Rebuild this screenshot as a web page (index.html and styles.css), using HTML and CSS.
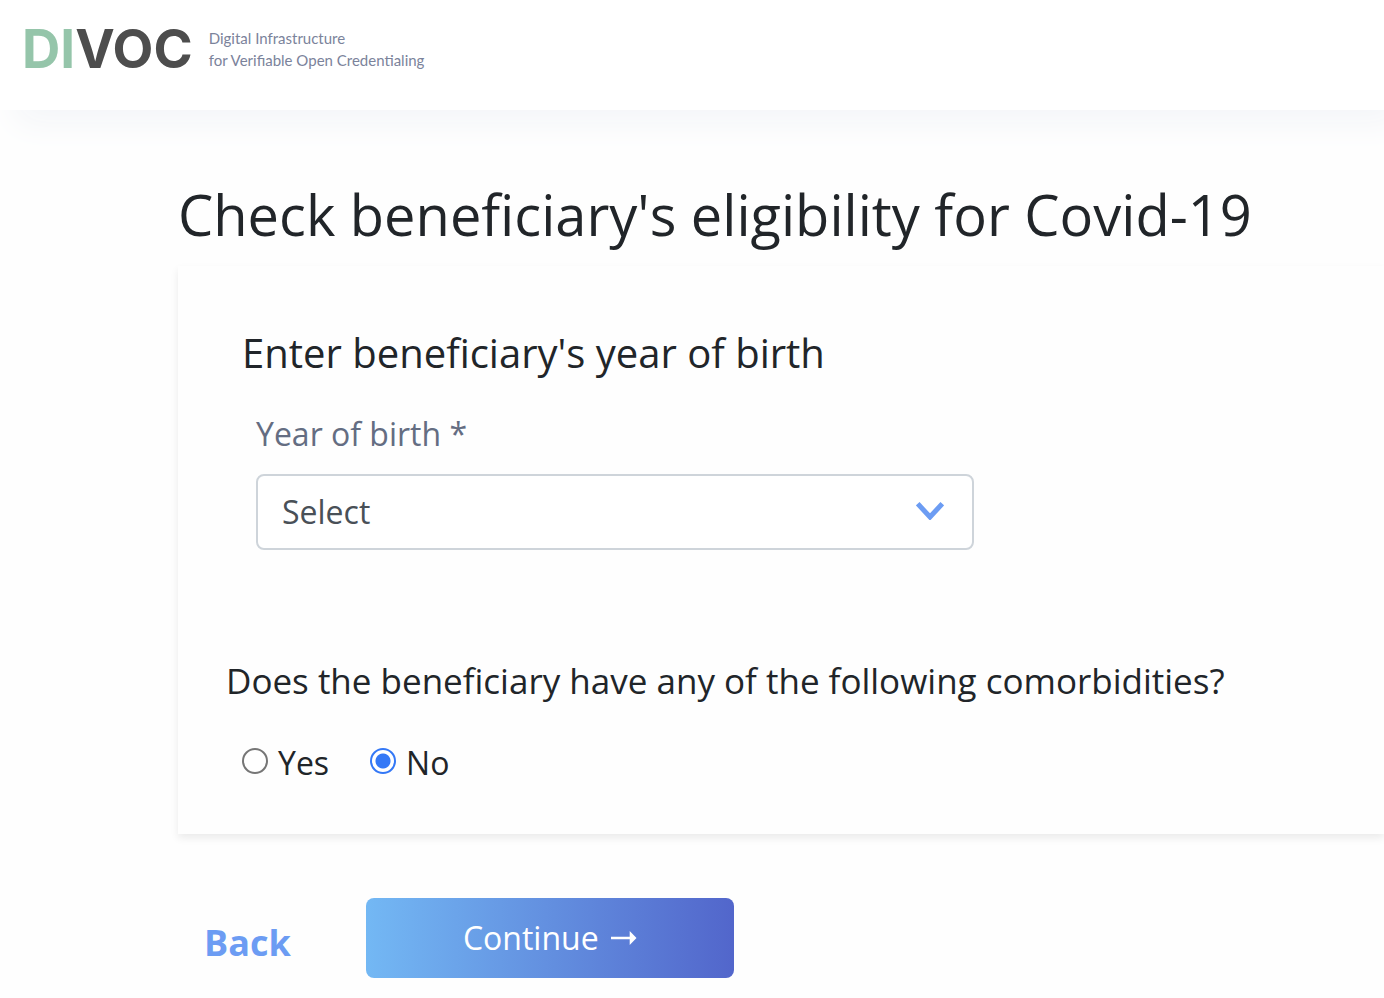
FILE: index.html
```
<!DOCTYPE html>
<html lang="en">
<head>
  <meta charset="utf-8">
  <meta name="viewport" content="width=device-width, initial-scale=1">
  <title>DIVOC - Check eligibility</title>
  <link rel="stylesheet" href="styles.css">
</head>
<body>
  <header class="header">
    <div class="logo"><span class="logo-accent">DI</span>VOC</div>
    <p class="tagline">Digital Infrastructure<br>for Verifiable Open Credentialing</p>
  </header>
  <main class="main">
    <h1 class="title">Check beneficiary's eligibility for Covid-19</h1>
    <form class="form">
      <div class="card">
        <section class="birth">
          <h2 class="subtitle">Enter beneficiary's year of birth</h2>
          <div class="field">
            <label class="label" for="year">Year of birth *</label>
            <div class="select-wrap">
              <select class="select" id="year">
                <option>Select</option>
              </select>
              <svg class="chevron" viewBox="0 0 28 18" aria-hidden="true"><path d="M1.7 1.7 14 15 26.3 1.7" /></svg>
            </div>
          </div>
        </section>
        <fieldset class="question">
          <legend class="legend">Does the beneficiary have any of the following comorbidities?</legend>
          <div class="options">
            <label class="option"><input class="radio" type="radio" name="comorbid">Yes</label>
            <label class="option"><input class="radio" type="radio" name="comorbid" checked>No</label>
          </div>
        </fieldset>
      </div>
      <div class="actions">
        <a class="back" href="#">Back</a>
        <button class="continue" type="button">
          <span>Continue</span>
          <svg class="arrow" viewBox="0 0 26 14" aria-hidden="true"><path d="M0 5.700h18.700V0L25.500 7 18.700 14V8.300H0z" /></svg>
        </button>
      </div>
    </form>
  </main>
</body>
</html>
```
FILE: styles.css
```
* {
  box-sizing: border-box;
}

body {
  margin: 0;
  background: #fefefe;
  color: #212529;
  font-family: "Open Sans", "Noto Sans", sans-serif;
  font-size: 32px;
  line-height: 48px;
  overflow-x: hidden;
}

.header {
  display: flex;
  align-items: center;
  gap: 16px;
  padding: 17px 22px 29px;
  background: #fff;
  box-shadow: 16px 12px 32px #f3f5f8;
}

.logo {
  color: #4d4d4d;
  font-family: Inter, sans-serif;
  font-size: 53px;
  font-weight: 700;
  line-height: 64px;
}

.logo-accent {
  color: #95c5aa;
}

.tagline {
  margin: 0;
  color: #7b839b;
  font-family: Lato, sans-serif;
  font-size: 15px;
  line-height: 22px;
}

.main {
  padding: 70px 0 20px 178px;
}

.title {
  margin: 0 0 18px;
  font-size: 56px;
  font-weight: 400;
  line-height: 68px;
}

.card {
  padding: 63px 48px 47px;
  background: #fefefe;
  box-shadow: 0 4px 8px rgba(0, 0, 0, 0.08);
}

.birth {
  padding-left: 16px;
}

.subtitle {
  margin: 0 0 33px;
  font-size: 40px;
  font-weight: 400;
  line-height: 48px;
}

.field {
  padding-left: 14px;
  max-width: 732px;
}

.label {
  display: block;
  margin-bottom: 16px;
  color: #646d82;
}

.select-wrap {
  position: relative;
}

.select {
  display: block;
  width: 100%;
  height: 76px;
  padding: 0 64px 0 24px;
  appearance: none;
  border: 2px solid #ced4da;
  border-radius: 8px;
  background: #fff;
  color: #495057;
  font: inherit;
}

.chevron {
  position: absolute;
  top: 28px;
  right: 30px;
  width: 28px;
  height: 18px;
  fill: none;
  stroke: #6c9cf3;
  stroke-width: 5;
  pointer-events: none;
}

.question {
  margin: 104px 0 0;
  padding: 0;
  border: 0;
}

.legend {
  padding: 0;
  font-size: 35px;
  line-height: 54px;
}

.options {
  display: flex;
  gap: 41px;
  padding: 31px 0 0 16px;
}

.option {
  display: flex;
  align-items: center;
  gap: 10px;
}

.radio {
  width: 26px;
  height: 26px;
  margin: 0 0 4px;
  appearance: none;
  border: 2px solid #767676;
  border-radius: 50%;
  background: #fff;
}

.radio:checked {
  border-color: #3478f6;
  background: radial-gradient(circle, #3478f6 7px, #fff 8px);
}

.actions {
  display: flex;
  align-items: center;
  gap: 75px;
  padding: 64px 0 0 26px;
}

.back {
  padding-top: 10px;
  color: #6c9cf3;
  font-size: 36px;
  font-weight: 700;
  text-decoration: none;
}

.continue {
  display: flex;
  align-items: center;
  justify-content: center;
  gap: 12px;
  width: 368px;
  height: 80px;
  padding: 0;
  border: 0;
  border-radius: 8px;
  background: linear-gradient(90deg, #73b8f4, #5266cb);
  color: #fff;
  font: inherit;
}

.arrow {
  width: 26px;
  height: 14px;
  fill: currentColor;
}
```
